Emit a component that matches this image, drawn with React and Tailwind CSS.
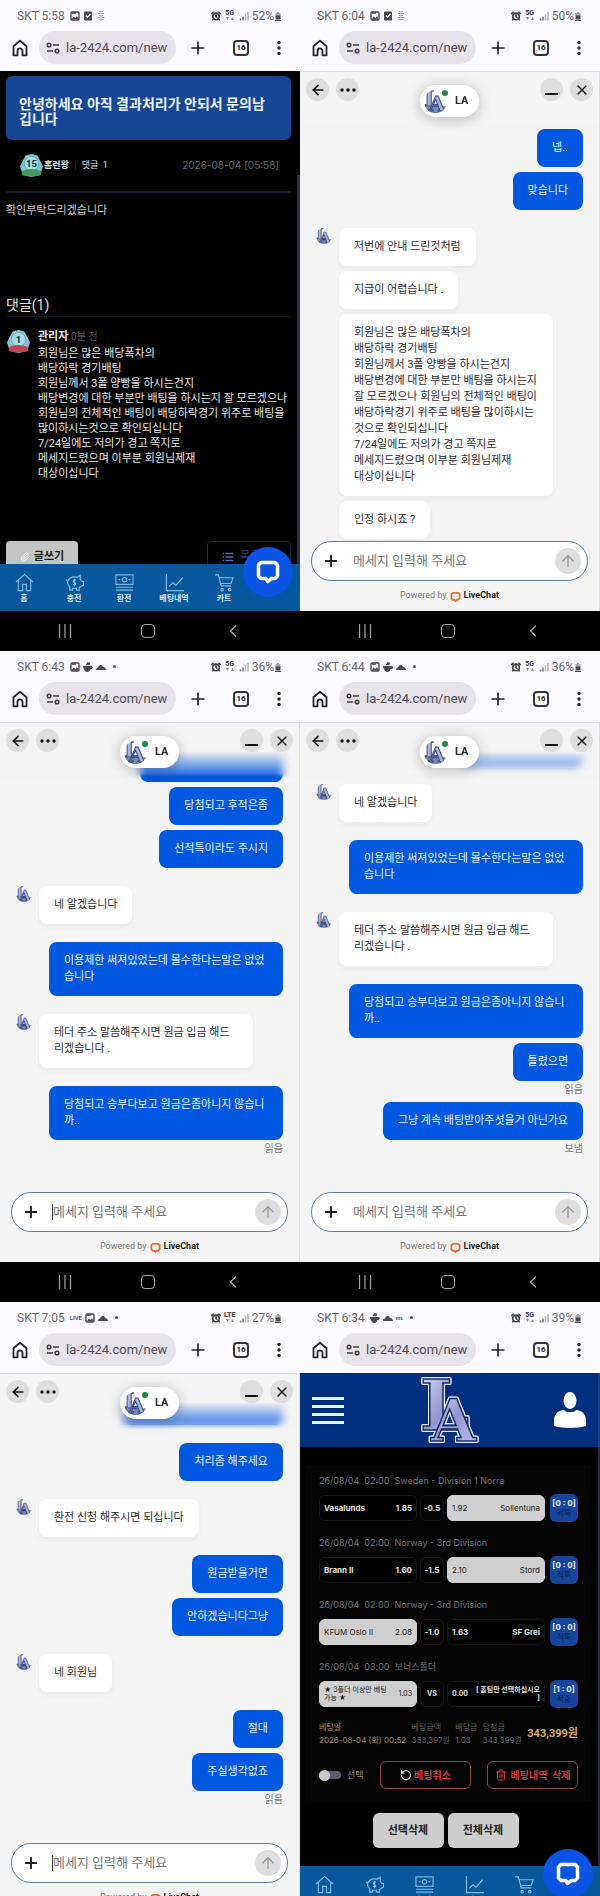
import React, { useState } from 'react';
import { AlarmClock, ArrowLeft, ArrowUp, ChevronLeft, List, Paperclip, Plus, RotateCcw, Trash2, X } from 'lucide-react';

// Conversations
const CHAT_1 = [
  { from: 'me', texts: ['넵..', '맞습니다'] },
  {
    from: 'agent',
    texts: [
      '저번에 안내 드린것처럼',
      '지급이 어렵습니다 .',
      '회원님은 많은 배당폭차의\n배당하락 경기배팅\n회원님께서 3폴 양빵을 하시는건지\n배당변경에 대한 부분만 배팅을 하시는지 잘 모르겠으나 회원님의 전체적인 배팅이 배당하락경기 위주로 배팅을 많이하시는것으로 확인되십니다\n7/24일에도 저의가 경고 쪽지로\n메세지드렸으며 이부분 회원님제재\n대상이십니다',
      '인정 하시죠 ?',
    ],
  },
];

const CHAT_2 = [
  { from: 'me', scrolled: 'w-[143px]', texts: ['당첨되고 후적은좀', '선적특이라도 주시지'] },
  { from: 'agent', texts: ['네 알겠습니다'] },
  { from: 'me', texts: ['이용제한 써져있었는데 몰수한다는말은 없었습니다'] },
  { from: 'agent', texts: ['테더 주소 말씀해주시면 원금 입금 해드리겠습니다 .'] },
  { from: 'me', texts: ['당첨되고 승부다보고 원금은좀아니지 않습니까..'], status: '읽음' },
];

const CHAT_3 = [
  { from: 'me', scrolled: 'w-[123px]', texts: [] },
  { from: 'agent', texts: ['네 알겠습니다'] },
  { from: 'me', texts: ['이용제한 써져있었는데 몰수한다는말은 없었습니다'] },
  { from: 'agent', texts: ['테더 주소 말씀해주시면 원금 입금 해드리겠습니다 .'] },
  { from: 'me', texts: ['당첨되고 승부다보고 원금은좀아니지 않습니까..', '틀렸으면'], status: '읽음', tight: true },
  { from: 'me', texts: ['그냥 계속 배팅받아주셧을거 아닌가요'], status: '보냄' },
];

const CHAT_4 = [
  { from: 'me', scrolled: 'w-[160px]', texts: [] },
  { from: 'me', texts: ['처리좀 해주세요'] },
  { from: 'agent', texts: ['환전 신청 해주시면 되십니다'] },
  { from: 'me', texts: ['원금받을거면', '안하겠습니다그냥'] },
  { from: 'agent', texts: ['네 회원님'] },
  { from: 'me', texts: ['절대', '주실생각없죠'], status: '읽음' },
];

const BETS = [
  { title: '26/08/04  02:00  Sweden - Division 1 Norra', home: 'Vasalunds', homeOdd: '1.85', mid: '-0.5', awayOdd: '1.92', away: 'Sollentuna', pick: 'away', score: '[0 : 0]', result: '적특' },
  { title: '26/08/04  02:00  Norway - 3rd Division', home: 'Brann II', homeOdd: '1.60', mid: '-1.5', awayOdd: '2.10', away: 'Stord', pick: 'away', score: '[0 : 0]', result: '적특' },
  { title: '26/08/04  02:00  Norway - 3rd Division', home: 'KFUM Oslo II', homeOdd: '2.08', mid: '-1.0', awayOdd: '1.63', away: 'SF Grei', pick: 'home', score: '[0 : 0]', result: '적특' },
  { title: '26/08/04  03:00  보너스폴더', home: '★ 3폴더 이상만 베팅\n가능 ★', homeOdd: '1.03', mid: 'VS', awayOdd: '0.00', away: '[ 홈팀만 선택하십시오\n]', pick: 'home', score: '[1 : 0]', result: '적중', bonus: true },
];

/* ---------- Status bar glyphs ---------- */

const PictureGlyph = () => (
  <svg viewBox="0 0 10 10" className="w-2.5 h-2.5" fill="none" stroke="#4a4a4e">
    <rect x="1" y="1" width="8" height="8" rx="1" strokeWidth="1.4" />
    <path d="M1.5 8.5 3.5 5.5 5.5 7 7 5l2 3.5z" fill="#4a4a4e" stroke="none" />
    <path d="M2 2h4" strokeWidth="1.6" />
  </svg>
);

const CheckGlyph = () => (
  <svg viewBox="0 0 10 10" className="w-2.5 h-2.5">
    <rect x="1" y="0.5" width="8" height="9" rx="1" fill="#4a4a4e" />
    <path d="M3 4.5 4.6 6.3 7.4 3" fill="none" stroke="#fff" strokeWidth="1.2" />
  </svg>
);

const KeyGlyph = () => (
  <svg viewBox="0 0 10 10" className="w-2.5 h-2.5" fill="none" stroke="#8fb5b5" strokeWidth="1">
    <path d="M3 .5h4M2 2.500h6M3 4.500h4M1.500 6.500h7M2.500 8.500h5" />
    <path d="M5 0v10" stroke="#b9cfcf" />
  </svg>
);

const BowlGlyph = () => (
  <svg viewBox="0 0 10 10" className="w-2.5 h-2.5" fill="#4a4a4e">
    <path d="M0 4h8c2.500 0 2.500 3-.4 3C7 9 6 10 4.500 10 2 10 .500 7.500 0 4z" />
    <path d="M2.500 3.300 4.500 0l2.800.8-1 2.500z" />
  </svg>
);

const CloudGlyph = () => (
  <svg viewBox="0 0 10 10" className="w-2.5 h-2.5" fill="#4a4a4e">
    <path d="M0 8c0-2 1.500-2.500 2.200-2.500C2.800 2.500 6.200 2.300 7 5 9 5 10 6.500 10 8z" />
  </svg>
);

const SmallText = ({ children }) => (
  <span className="text-center text-[6px] leading-[10px] font-bold text-[#55555a]">{children}</span>
);

const Dot = () => <span className="ml-1 w-[3px] h-[3px] rounded-full bg-[#55555a]" />;

const GLYPHS = {
  picture: PictureGlyph,
  check: CheckGlyph,
  key: KeyGlyph,
  bowl: BowlGlyph,
  cloud: CloudGlyph,
  dot: Dot,
  live: () => <SmallText>LIVE</SmallText>,
  inu: () => <SmallText>ınι</SmallText>,
};

const StatusBar = ({ time, glyphs, network, battery }) => (
  <div className="flex h-[31px] items-center justify-between pl-[17px] pr-[18px] text-xs text-[#66666c]">
    <div className="flex items-center gap-[3px]">
      <span className="mr-0.5">SKT {time}</span>
      {glyphs.map((g) => {
        const Glyph = GLYPHS[g];
        return <Glyph key={g} />;
      })}
    </div>
    <div className="flex items-center gap-[3px]">
      <AlarmClock className="w-2.5 h-2.5 text-[#3c3c40]" strokeWidth={4} />
      <span className="flex w-3 flex-col items-center text-[7px] leading-[7px] font-black text-[#4a4a4e]">
        {network}
        <svg viewBox="0 0 8 4" className="w-2 h-1" fill="#8a8a8f"><path d="M0 0h3L1.500 3zM8 3H5l1.500-3z" /></svg>
      </span>
      <svg viewBox="0 0 10 10" className="w-2.5 h-2.5" fill="none" strokeWidth="1.5">
        <path d="M1.500 9.500V7.500M4 9.500V5.500" stroke="#77777c" />
        <path d="M6.500 9.500V3M9 9.500V1" stroke="#b5b5ba" />
      </svg>
      <span className="flex items-center">
        {battery}%
        <svg viewBox="0 0 8 10" className="w-2 h-2.5">
          <path d="M3 1h2v1h1.500v3h-5V2H3z" fill="#a5a5aa" />
          <path d="M1.500 4.500h5v4h-5z" fill="#4a4a4e" />
          <path d="M1 9.500h6" stroke="#4a4a4e" />
        </svg>
      </span>
    </div>
  </div>
);

const BrowserBar = () => (
  <div className="flex h-10 items-start text-[#222226]">
    <button aria-label="홈" className="flex h-[33px] w-[39px] items-center justify-center">
      <svg viewBox="0 0 16 18" className="w-4 h-[18px]" fill="none" stroke="currentColor" strokeWidth="1.8">
        <path d="M1.500 7.200 8 1.700l6.500 5.500v9.100h-4v-4.500a2.500 2.500 0 0 0-5 0v4.500h-4z" strokeLinejoin="round" />
      </svg>
    </button>
    <div className="flex h-[33px] w-[137px] items-center gap-1.5 rounded-full bg-[#e7e3ea] pl-[7px] pr-1">
      <svg viewBox="0 0 14 12" className="w-3.5 h-3 shrink-0" fill="none" stroke="#3c3c40" strokeWidth="1.5">
        <circle cx="3" cy="3" r="1.8" />
        <path d="M7 3h6M1 9h6" />
        <circle cx="11" cy="9" r="1.8" />
      </svg>
      <input aria-label="주소" readOnly value="la-2424.com/new" className="w-full min-w-0 bg-transparent text-[13px] text-[#4a4a50] outline-none" />
    </div>
    <div className="flex h-[33px] flex-1 items-center justify-between pl-3 pr-4">
      <button aria-label="새 탭"><Plus className="w-5 h-5" strokeWidth={2} /></button>
      <button aria-label="탭 목록" className="flex h-4 w-4 items-center justify-center rounded-[4px] border-2 border-[#333338] text-[8px] leading-none font-bold">16</button>
      <button aria-label="메뉴">
        <svg viewBox="0 0 10 16" className="w-2.5 h-4" fill="currentColor">
          <circle cx="5" cy="2.5" r="1.7" />
          <circle cx="5" cy="8" r="1.7" />
          <circle cx="5" cy="13.5" r="1.7" />
        </svg>
      </button>
    </div>
  </div>
);

const AndroidNav = () => (
  <div className="flex h-[39px] items-center justify-between bg-black pl-[58px] pr-[61px] text-[#a8a8a8]">
    <button aria-label="최근 앱">
      <svg viewBox="0 0 14 14" className="w-3.5 h-3.5" stroke="currentColor" strokeWidth="1.2">
        <path d="M1.500 0v14M7 0v14M12.500 0v14" />
      </svg>
    </button>
    <button aria-label="홈 화면" className="h-3.5 w-3.5 rounded-[4px] border border-current" />
    <button aria-label="뒤로" className="-mr-1"><ChevronLeft className="w-5 h-5" strokeWidth={1.5} /></button>
  </div>
);

const Phone = ({ status, children }) => (
  <section className="min-w-0">
    <div className="bg-[#fbfaff]">
      <StatusBar {...status} />
      <BrowserBar />
    </div>
    <div className="relative flex h-[540px] flex-col overflow-hidden">{children}</div>
    <AndroidNav />
  </section>
);

/* ---------- Team logo ---------- */

const TeamLogo = ({ className }) => (
  <svg viewBox="0 0 56 66" className={className} fontFamily="'DejaVu Serif', serif" fontWeight="bold" overflow="visible">
    <defs>
      <linearGradient id="silver" x1="0" y1="0" x2="1" y2="1">
        <stop offset="0" stopColor="#e4e6f7" />
        <stop offset="0.5" stopColor="#8f97cf" />
        <stop offset="1" stopColor="#c9cdf0" />
      </linearGradient>
    </defs>
    <g className="[filter:drop-shadow(1px_0_0_#e8ecff)_drop-shadow(-1px_0_0_#e8ecff)_drop-shadow(0_1px_0_#e8ecff)_drop-shadow(0_-1px_0_#e8ecff)]" fill="url(#silver)" stroke="#152a66" strokeWidth="1.5">
      <text x="-1" y="53" fontSize="70">L</text>
      <text x="10" y="64" fontSize="58">A</text>
    </g>
  </svg>
);

const AgentAvatar = ({ className }) => (
  <svg viewBox="0 0 24 24" className={className} fontFamily="'DejaVu Serif', serif" fontWeight="bold">
    <clipPath id="avatar-clip"><circle cx="12" cy="12" r="12" /></clipPath>
    <g clipPath="url(#avatar-clip)" fill="#a9b5da" stroke="#34467f" strokeWidth="1">
      <path d="M0 17h24v7H0z" fill="#7585b5" stroke="none" />
      <text x="0" y="17" fontSize="23">L</text>
      <text x="5" y="22" fontSize="22">A</text>
    </g>
  </svg>
);

/* ---------- Chat screen ---------- */

const Bubble = ({ mine, children, className = '' }) => (
  <p className={`min-h-[38px] whitespace-pre-line rounded-lg px-[15px] py-[11px] text-[11px] leading-4 ${mine ? 'max-w-[234px] bg-[#0057e0] text-[#e6f1ff]' : 'max-w-[214px] bg-white text-[#2c2c2e] shadow-[0_3px_6px_rgba(0,0,0,0.05)]'} ${className}`}>
    {children}
  </p>
);

const MessageGroup = ({ group }) => {
  const mine = group.from === 'me';
  return (
    <div className={`relative flex flex-col gap-[5px] ${mine ? 'items-end' : 'items-start'} ${group.tight ? '-mb-[13px]' : ''}`}>
      {!mine && <AgentAvatar className="absolute -left-[23px] top-0 w-4 h-4" />}
      {group.scrolled && <Bubble mine className={group.scrolled} />}
      {group.texts.map((t) => <Bubble key={t} mine={mine}>{t}</Bubble>)}
      {group.status && <span className="-mt-[5px] h-4 pt-px text-[10px] leading-4 text-[#77777a]">{group.status}</span>}
    </div>
  );
};

const RoundButton = ({ label, children }) => (
  <button aria-label={label} className="flex h-[23px] w-[23px] items-center justify-center rounded-full bg-[#dededf] text-[#111]">{children}</button>
);

const ChatScreen = ({ groups, focused, full }) => {
  const [message, setMessage] = useState('');

  return (
    <div className="relative flex flex-1 flex-col overflow-hidden border-t border-r border-[#dcdce3] bg-[#f4f4f4]">
      <div className={`flex min-h-0 flex-1 flex-col justify-end gap-[18px] overflow-hidden pl-[39px] pr-4 ${full ? 'pb-0.5' : 'pb-9'}`}>
        {groups.map((g, i) => <MessageGroup key={i} group={g} />)}
      </div>

      {/* Header floats over the scrolled messages */}
      <div className="absolute inset-x-0 top-0 h-[56px] bg-linear-to-b from-[#f4f4f4] from-50% to-[#f4f4f4]/0 backdrop-blur-xs [mask-image:linear-gradient(black_90%,transparent)]" />
      <div className="absolute inset-x-0 top-0 flex items-start justify-between px-1.5 pt-1.5">
        <div className="flex gap-[7px]">
          <RoundButton label="뒤로"><ArrowLeft className="w-4 h-4" strokeWidth={2.5} /></RoundButton>
          <RoundButton label="더보기">
            <svg viewBox="0 0 16 4" className="w-4 h-1" fill="currentColor">
              <circle cx="2" cy="2" r="1.7" />
              <circle cx="8" cy="2" r="1.7" />
              <circle cx="14" cy="2" r="1.7" />
            </svg>
          </RoundButton>
        </div>
        <div className="mt-[7px] flex h-8 w-[59px] items-center gap-2 rounded-full bg-white pl-1 text-[11px] font-bold text-[#2c2c2e] shadow-[0_2px_14px_rgba(0,0,0,0.25)]">
          <span className="relative">
            <AgentAvatar className="w-[23px] h-[23px]" />
            <span className="absolute -right-px top-0 h-1.5 w-1.5 rounded-full bg-[#1f8a48]" />
          </span>
          LA
        </div>
        <div className="flex gap-[7px]">
          <RoundButton label="최소화"><span className="mt-2 h-0.5 w-[13px] bg-current" /></RoundButton>
          <RoundButton label="닫기"><X className="w-4 h-4" strokeWidth={2} /></RoundButton>
        </div>
      </div>

      <div className="mx-[11px] flex h-10 items-center rounded-full border border-[#5f7f9f] bg-white pl-2.5 pr-1.5">
        <button aria-label="첨부"><Plus className="w-[18px] h-[18px] text-[#1c1c1e]" strokeWidth={2.5} /></button>
        <span className={`ml-3 h-4 w-px ${focused ? 'bg-[#333]' : 'bg-transparent'}`} />
        <input
          aria-label="메세지"
          placeholder="메세지 입력해 주세요"
          value={message} onChange={(e) => setMessage(e.target.value)}
          className="min-w-0 flex-1 bg-transparent text-[13px] text-[#333] placeholder:text-[#77777a] outline-none"
        />
        <button aria-label="보내기" className="flex h-[26px] w-[26px] items-center justify-center rounded-full bg-[#dedede]">
          <ArrowUp className="w-[18px] h-[18px] text-[#99999c]" strokeWidth={1.8} />
        </button>
      </div>
      <div className="flex h-[30px] items-center justify-center gap-[3px] text-[9px] text-[#77777a]">
        Powered by
        <svg viewBox="0 0 12 12" className="w-[11px] h-[11px]" fill="none" stroke="#e0703a" strokeWidth="2">
          <path d="M3 2h6l1.500 1.500v4.500L9 9.500H7.500L6 11 5 9.500H3L1.500 8V3.500z" strokeLinejoin="round" />
        </svg>
        <strong className="text-[#1c1c1e]">LiveChat</strong>
      </div>
    </div>
  );
};

/* ---------- Site pieces ---------- */

const HomeIcon = () => (
  <>
    <path d="M1 9.500 10 1.500l9 8M3.500 8v10.500h4.500V12h4v6.500h4.500V8" />
  </>
);

const PiggyIcon = () => (
  <>
    <path d="M3 8.500C5 4.500 9 3.500 12.500 4.500L16 2.500v4l2 2.500h1.500v4l-2.500 1-2 1.500V18h-3v-2H8v2H5v-3.500C3 13 2.500 10.500 3 8.500zM3 9 1 7" />
    <path d="M11.500 7.500c-3-1-3.500 2-1.500 2.500s2 3-1.500 2M10 6v8" />
  </>
);

const BanknoteIcon = () => (
  <>
    <rect x="1" y="2" width="18" height="10" />
    <circle cx="10" cy="7" r="2.3" />
    <path d="M4 7h1.500M14.500 7H16M1 15h18M1 18h18" />
  </>
);

const ChartIcon = () => (
  <>
    <path d="M1.500 1v17.500H20M4.500 14l4-4 3 3 7-8" />
  </>
);

const CartIcon = () => (
  <>
    <path d="M0 2h3.500l3 11.500h10.500M4.500 5h14.500l-2 6H6" />
    <circle cx="7.5" cy="17.5" r="1.3" />
    <circle cx="15.5" cy="17.5" r="1.3" />
  </>
);

const TABS = [
  { icon: HomeIcon, label: '홈' },
  { icon: PiggyIcon, label: '충전' },
  { icon: BanknoteIcon, label: '환전' },
  { icon: ChartIcon, label: '베팅내역' },
  { icon: CartIcon, label: '카트' },
];

const SiteTabs = () => (
  <>
    <nav className="grid h-[47px] shrink-0 grid-cols-6 bg-[#07589c] text-[#d9ecfb]">
      {TABS.map(({ icon: Icon, label }) => (
        <a key={label} href="#" className="flex flex-col items-center pt-[9px] pr-0.5 text-[8px] leading-[10px] font-bold whitespace-nowrap">
          <svg viewBox="0 0 20 20" className="mb-0.5 w-[19px] h-[19px]" fill="none" stroke="#84bbe8" strokeWidth="1.2">
            <Icon />
          </svg>
          {label}
        </a>
      ))}
    </nav>
    <button aria-label="채팅 열기" className="absolute bottom-3.5 right-[7px] flex h-[50px] w-[50px] items-center justify-center rounded-full bg-[#0a55e6]">
      <svg viewBox="0 0 24 24" className="w-6 h-6" fill="none" stroke="#fff" strokeWidth="3.5" strokeLinejoin="round">
        <path d="M5 2.500h14L21.500 5v11L19 18.500h-3.500L11.500 21.500 10 18.500H5L2.500 16V5z" />
      </svg>
    </button>
  </>
);

const LevelBadge = ({ level, base, body }) => (
  <svg viewBox="0 0 26 26" className="w-[25px] h-[25px] shrink-0">
    <path d="M7 2.500 13 1l6 1.500 2.500 4.500L25 14l-3 9-9 2-9-2-3-9L4.500 7z" fill={body} />
    <path d="M8 3h5l-3 5z" fill="#fff" opacity="0.7" />
    <circle cx="13" cy="11" r="7.5" fill="#9fdcea" stroke="#5faabd" />
    <path d="M3 19c6-3 14-3 20 0v4c-6 2-14 2-20 0z" fill={base} />
    <text x="13" y="15" textAnchor="middle" fontSize="10" fontWeight="bold" fill="#14323c">{level}</text>
  </svg>
);

const PostScreen = () => (
  <>
    <main className="min-h-0 flex-1 overflow-hidden bg-black pl-1.5 pr-[9px] text-[#e2e2e2]">
      <h1 className="mt-[5px] h-16 rounded-md bg-[#164694] pt-[21px] pl-[13px] pr-4 text-sm leading-[15px] font-bold text-[#eaf3ff]">
        안녕하세요 아직 결과처리가 안되서 문의남깁니다
      </h1>
      <div className="flex h-[53px] items-center border-b-2 border-[#191c33] pl-[13px] pr-3 text-[9px]">
        <LevelBadge level="15" base="#3f9a5a" body="#7fc4c9" />
        <span className="font-bold">홈런왕</span>
        <span className="mx-1.5 h-2 w-px bg-[#222]" />
        <span className="whitespace-pre">댓글  1</span>
        <time className="ml-auto text-[10px] text-[#66666a] font-['Inter',sans-serif]">2026-08-04 [05:58]</time>
      </div>
      <p className="pt-2 text-[11px] leading-5 text-[#cfcfcf]">확인부탁드리겠습니다</p>

      <h2 className="mt-[73px] border-b border-[#17171a] text-sm leading-[22px]">댓글(1)</h2>
      <article className="flex gap-[7px] pt-2.5">
        <span className="pt-0.5"><LevelBadge level="1" base="#c8434e" body="#8fc3d2" /></span>
        <div className="min-w-0 text-[11px] text-[#e8e8e8]">
          <header className="leading-[19px]">
            <strong>관리자</strong> <span className="text-[10px] text-[#5c5c60]">0분 전</span>
          </header>
          <p className="whitespace-pre leading-[15px]">
            {'회원님은 많은 배당폭차의\n배당하락 경기배팅\n회원님께서 3폴 양빵을 하시는건지\n배당변경에 대한 부분만 배팅을 하시는지 잘 모르겠으나\n회원님의 전체적인 배팅이 배당하락경기 위주로 배팅을\n많이하시는것으로 확인되십니다\n7/24일에도 저의가 경고 쪽지로\n메세지드렸으며 이부분 회원님제재\n대상이십니다'}
          </p>
        </div>
      </article>

      <div className="mt-[60px] flex justify-between text-[11px]">
        <button className="flex h-8 w-[72px] items-center justify-center gap-1 rounded-sm bg-[#c4c4c4] font-bold text-[#1c1c1c]">
          <Paperclip className="w-2.5 h-2.5 text-white" />글쓰기
        </button>
        <button className="flex h-8 w-[84px] items-center gap-1.5 rounded-sm border border-[#20244a] pl-3.5 text-[#2c3f96]">
          <List className="w-3 h-3 text-[#5c6bc0]" strokeWidth={3} />목록
        </button>
      </div>
    </main>
    {/* scroll thumb */}
    <div className="absolute right-0 top-[104px] bottom-[47px] w-[3px] bg-[#2a2e48]" />
    <SiteTabs />
  </>
);

const PICKED = 'bg-[#cfcfcf] text-[#222] border-[#cfcfcf]';
const PLAIN = 'bg-black text-[#e2e2e2] border-[#161616] font-bold';

const BetRow = ({ bet }) => (
  <div className="h-[62px]">
    <p className="whitespace-pre text-[9px] leading-[18px] text-[#707074]">{bet.title}</p>
    <div className={`mt-1 flex h-7 items-center gap-[3px] leading-[8px] whitespace-pre ${bet.bonus ? 'text-[7px]' : 'text-[8px]'}`}>
      <div className={`flex h-[26px] flex-1 items-center justify-between rounded-md border px-1 ${bet.pick === 'home' ? PICKED : PLAIN}`}>
        <span>{bet.home}</span><span>{bet.homeOdd}</span>
      </div>
      <div className="flex h-[26px] w-6 items-center justify-center rounded-md border border-[#161616] font-bold text-[#e2e2e2]">{bet.mid}</div>
      <div className={`flex h-[26px] flex-1 items-center justify-between rounded-md border px-1 ${bet.pick === 'away' ? PICKED : PLAIN}`}>
        <span>{bet.awayOdd}</span><span className="text-right">{bet.away}</span>
      </div>
      <div className="ml-0.5 flex h-7 w-7 flex-col items-center justify-center rounded-md bg-[#17449c]">
        <strong className="text-[8px] leading-[11px] text-[#e6efff]">{bet.score}</strong>
        <span className="text-[8px] leading-[9px] text-[#0c1f52]">{bet.result}</span>
      </div>
    </div>
  </div>
);

const Figure = ({ label, value, className }) => (
  <div className={className}>
    <dt className="text-[8px] leading-[13px]">{label}</dt>
    <dd className="text-[8px] leading-[13px]">{value}</dd>
  </div>
);

const BetHistoryScreen = () => {
  const [selected, setSelected] = useState(false);

  return (
    <>
      <header className="flex h-[74px] shrink-0 items-center justify-between border-r-2 border-[#1a3f8c] bg-[#012f7f] pl-3 pr-3">
        <button aria-label="메뉴" className="flex w-8 flex-col gap-[5px]">
          <span className="h-[3px] bg-[#e9f3ff]" />
          <span className="h-[3px] bg-[#e9f3ff]" />
          <span className="h-[3px] bg-[#e9f3ff]" />
          <span className="h-[3px] bg-[#e9f3ff]" />
        </button>
        <TeamLogo className="w-14 h-[66px]" />
        <button aria-label="내 정보">
          <svg viewBox="0 0 32 36" className="w-8 h-9" fill="#fff">
            <ellipse cx="16" cy="8.5" rx="6.5" ry="8.5" />
            <path d="M0 34v-6c0-6 5-10 10-10 2 3 10 3 12 0 5 0 10 4 10 10v6c-8 2.500-24 2.500-32 0z" />
          </svg>
        </button>
      </header>
      <main className="min-h-0 flex-1 overflow-hidden border-r-2 border-[#252946] bg-black pl-1.5 pr-[7px] pt-[18px] font-['Inter','Noto_Sans_CJK_KR',sans-serif]">
        <div className="bg-[#050505] px-[13px] pt-[7px] pb-3">
          {BETS.map((b, i) => <BetRow key={i} bet={b} />)}
          <dl className="mt-px flex items-center justify-between whitespace-nowrap text-[#5f5f62]">
            <Figure label="베팅일" value="2026-08-04 (화) 00:52" className="text-[#a3874f]" />
            <Figure label="베팅금액" value="333,397원" />
            <Figure label="배당금" value="1.03" />
            <Figure label="당첨금" value="343,399원" />
            <div>
              <dt className="sr-only">합계</dt>
              <dd className="text-[11px] font-bold text-[#d3b26f] font-['Roboto','Noto_Sans_CJK_KR',sans-serif]">343,399원</dd>
            </div>
          </dl>
          <div className="mt-3.5 flex items-center justify-between text-[10px]">
            <label className="flex items-center gap-1.5 text-[9px] text-[#8a8a8c]">
              <span className="relative flex items-center">
                <input type="checkbox" checked={selected} onChange={(e) => setSelected(e.target.checked)} className="peer h-2 w-[22px] appearance-none rounded-full bg-[#5c5c6c]" />
                <span className="pointer-events-none absolute left-0 h-[11px] w-[11px] rounded-full bg-[#c9c9cc] peer-checked:left-[11px]" />
              </span>
              선택
            </label>
            <div className="flex gap-4">
              <button className="flex h-7 w-[91px] items-center justify-center gap-0.5 rounded-md border border-[#9a4448] font-bold text-[#d8393d]">
                <RotateCcw className="w-3 h-3 text-[#e2e2e2]" strokeWidth={2.5} />베팅취소
              </button>
              <button className="flex h-7 w-[91px] items-center justify-center gap-1 rounded-md border border-[#9a4448] font-bold whitespace-pre text-[#d8393d]">
                <Trash2 className="w-3 h-3" strokeWidth={2} />베팅내역  삭제
              </button>
            </div>
          </div>
        </div>
        <div className="mt-3 flex justify-center gap-1 pr-1.5 text-[11px] font-bold text-[#222]">
          <button className="h-[35px] w-[71px] rounded-md bg-[#cdcdcd]">선택삭제</button>
          <button className="h-[35px] w-[71px] rounded-md bg-[#cdcdcd]">전체삭제</button>
        </div>
      </main>
      <SiteTabs />
    </>
  );
};

export default function App() {
  return (
    <div className="h-screen overflow-hidden bg-black font-['Roboto','Noto_Sans_CJK_KR',sans-serif]">
      <div className="grid grid-cols-2 gap-y-px">
        <Phone status={{ time: '5:58', glyphs: ['picture', 'check', 'key'], network: '5G', battery: 52 }}>
          <PostScreen />
        </Phone>
        <Phone status={{ time: '6:04', glyphs: ['picture', 'check', 'key'], network: '5G', battery: 50 }}>
          <ChatScreen groups={CHAT_1} full />
        </Phone>
        <Phone status={{ time: '6:43', glyphs: ['picture', 'bowl', 'cloud', 'dot'], network: '5G', battery: 36 }}>
          <ChatScreen groups={CHAT_2} focused />
        </Phone>
        <Phone status={{ time: '6:44', glyphs: ['picture', 'bowl', 'cloud', 'dot'], network: '5G', battery: 36 }}>
          <ChatScreen groups={CHAT_3} />
        </Phone>
        <Phone status={{ time: '7:05', glyphs: ['live', 'picture', 'cloud', 'dot'], network: 'LTE', battery: 27 }}>
          <ChatScreen groups={CHAT_4} focused />
        </Phone>
        <Phone status={{ time: '6:34', glyphs: ['bowl', 'cloud', 'inu', 'dot'], network: '5G', battery: 39 }}>
          <BetHistoryScreen />
        </Phone>
      </div>
    </div>
  );
}
